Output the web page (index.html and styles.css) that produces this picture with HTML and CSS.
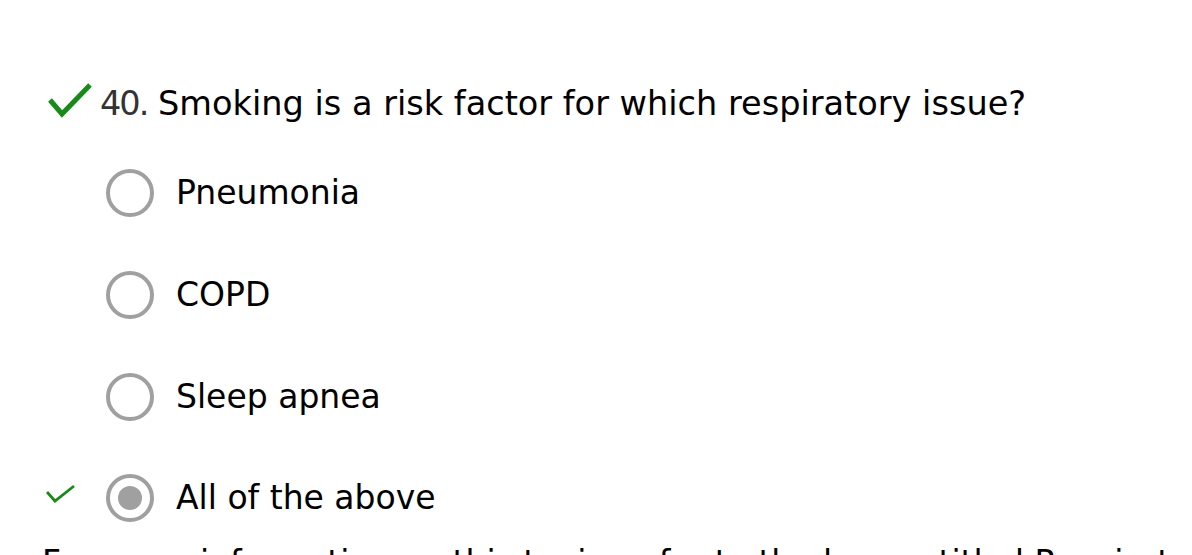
FILE: index.html
```html
<!DOCTYPE html>
<html>
<head>
<meta charset="utf-8">
<link rel="stylesheet" href="styles.css">
</head>
<body>
<div class="quiz">
  <div class="question">
    <div class="q-mark">
      <svg class="big-check" width="46" height="36" viewBox="0 0 46 36"><path d="M3 17 L15 31 L43 2" fill="none" stroke="#178a17" stroke-width="5"/></svg>
    </div>
    <div class="q-text"><span class="num">40.</span> Smoking is a risk factor for which respiratory issue?</div>
  </div>
  <ul class="options">
    <li class="option">
      <span class="o-mark"></span>
      <span class="radio"></span>
      <span class="label">Pneumonia</span>
    </li>
    <li class="option">
      <span class="o-mark"></span>
      <span class="radio"></span>
      <span class="label">COPD</span>
    </li>
    <li class="option">
      <span class="o-mark"></span>
      <span class="radio"></span>
      <span class="label">Sleep apnea</span>
    </li>
    <li class="option">
      <span class="o-mark"><svg width="30" height="20" viewBox="0 0 30 20"><path d="M1 8 L9 17 L28 2" fill="none" stroke="#178a17" stroke-width="2.8"/></svg></span>
      <span class="radio selected"></span>
      <span class="label">All of the above</span>
    </li>
  </ul>
  <p class="more">For more information on this topic, refer to the lesson titled Respiratory Issues</p>
</div>
</body>
</html>
```
FILE: styles.css
```css
html, body {
  margin: 0;
  padding: 0;
  background: #fff;
}
body {
  font-family: "DejaVu Sans", Verdana, sans-serif;
  font-size: 33px;
  color: #000;
  overflow: hidden;
  height: 555px;
}
.quiz {
  padding: 84px 0 0 46px;
}
.question {
  display: flex;
  align-items: flex-start;
  line-height: 40px;
  font-size: 33.55px;
}
.q-mark {
  width: 54px;
  flex: none;
  height: 40px;
  position: relative;
}
.big-check {
  position: absolute;
  left: 1px;
  top: -1px;
}
.num {
  color: #333;
  letter-spacing: -2px;
}
.q-text {
  white-space: nowrap;
}
.options {
  list-style: none;
  margin: 45px 0 0 0;
  padding: 0;
  display: flex;
  flex-direction: column;
  gap: 53.8px;
}
.option {
  display: flex;
  align-items: center;
  height: 48px;
}
.o-mark {
  width: 60px;
  flex: none;
  display: flex;
  align-items: center;
  height: 48px;
}
.o-mark svg {
  margin-top: -8px;
}
.radio {
  width: 48px;
  height: 48px;
  box-sizing: border-box;
  border: 4px solid #a0a0a0;
  border-radius: 50%;
  flex: none;
  display: flex;
  align-items: center;
  justify-content: center;
}
.radio.selected::after {
  content: "";
  width: 24px;
  height: 24px;
  border-radius: 50%;
  background: #a0a0a0;
}
.label {
  margin-left: 22px;
  line-height: 40px;
  white-space: nowrap;
}
.more {
  margin: 21px 0 0 -4px;
  line-height: 40px;
  white-space: nowrap;
}
```
